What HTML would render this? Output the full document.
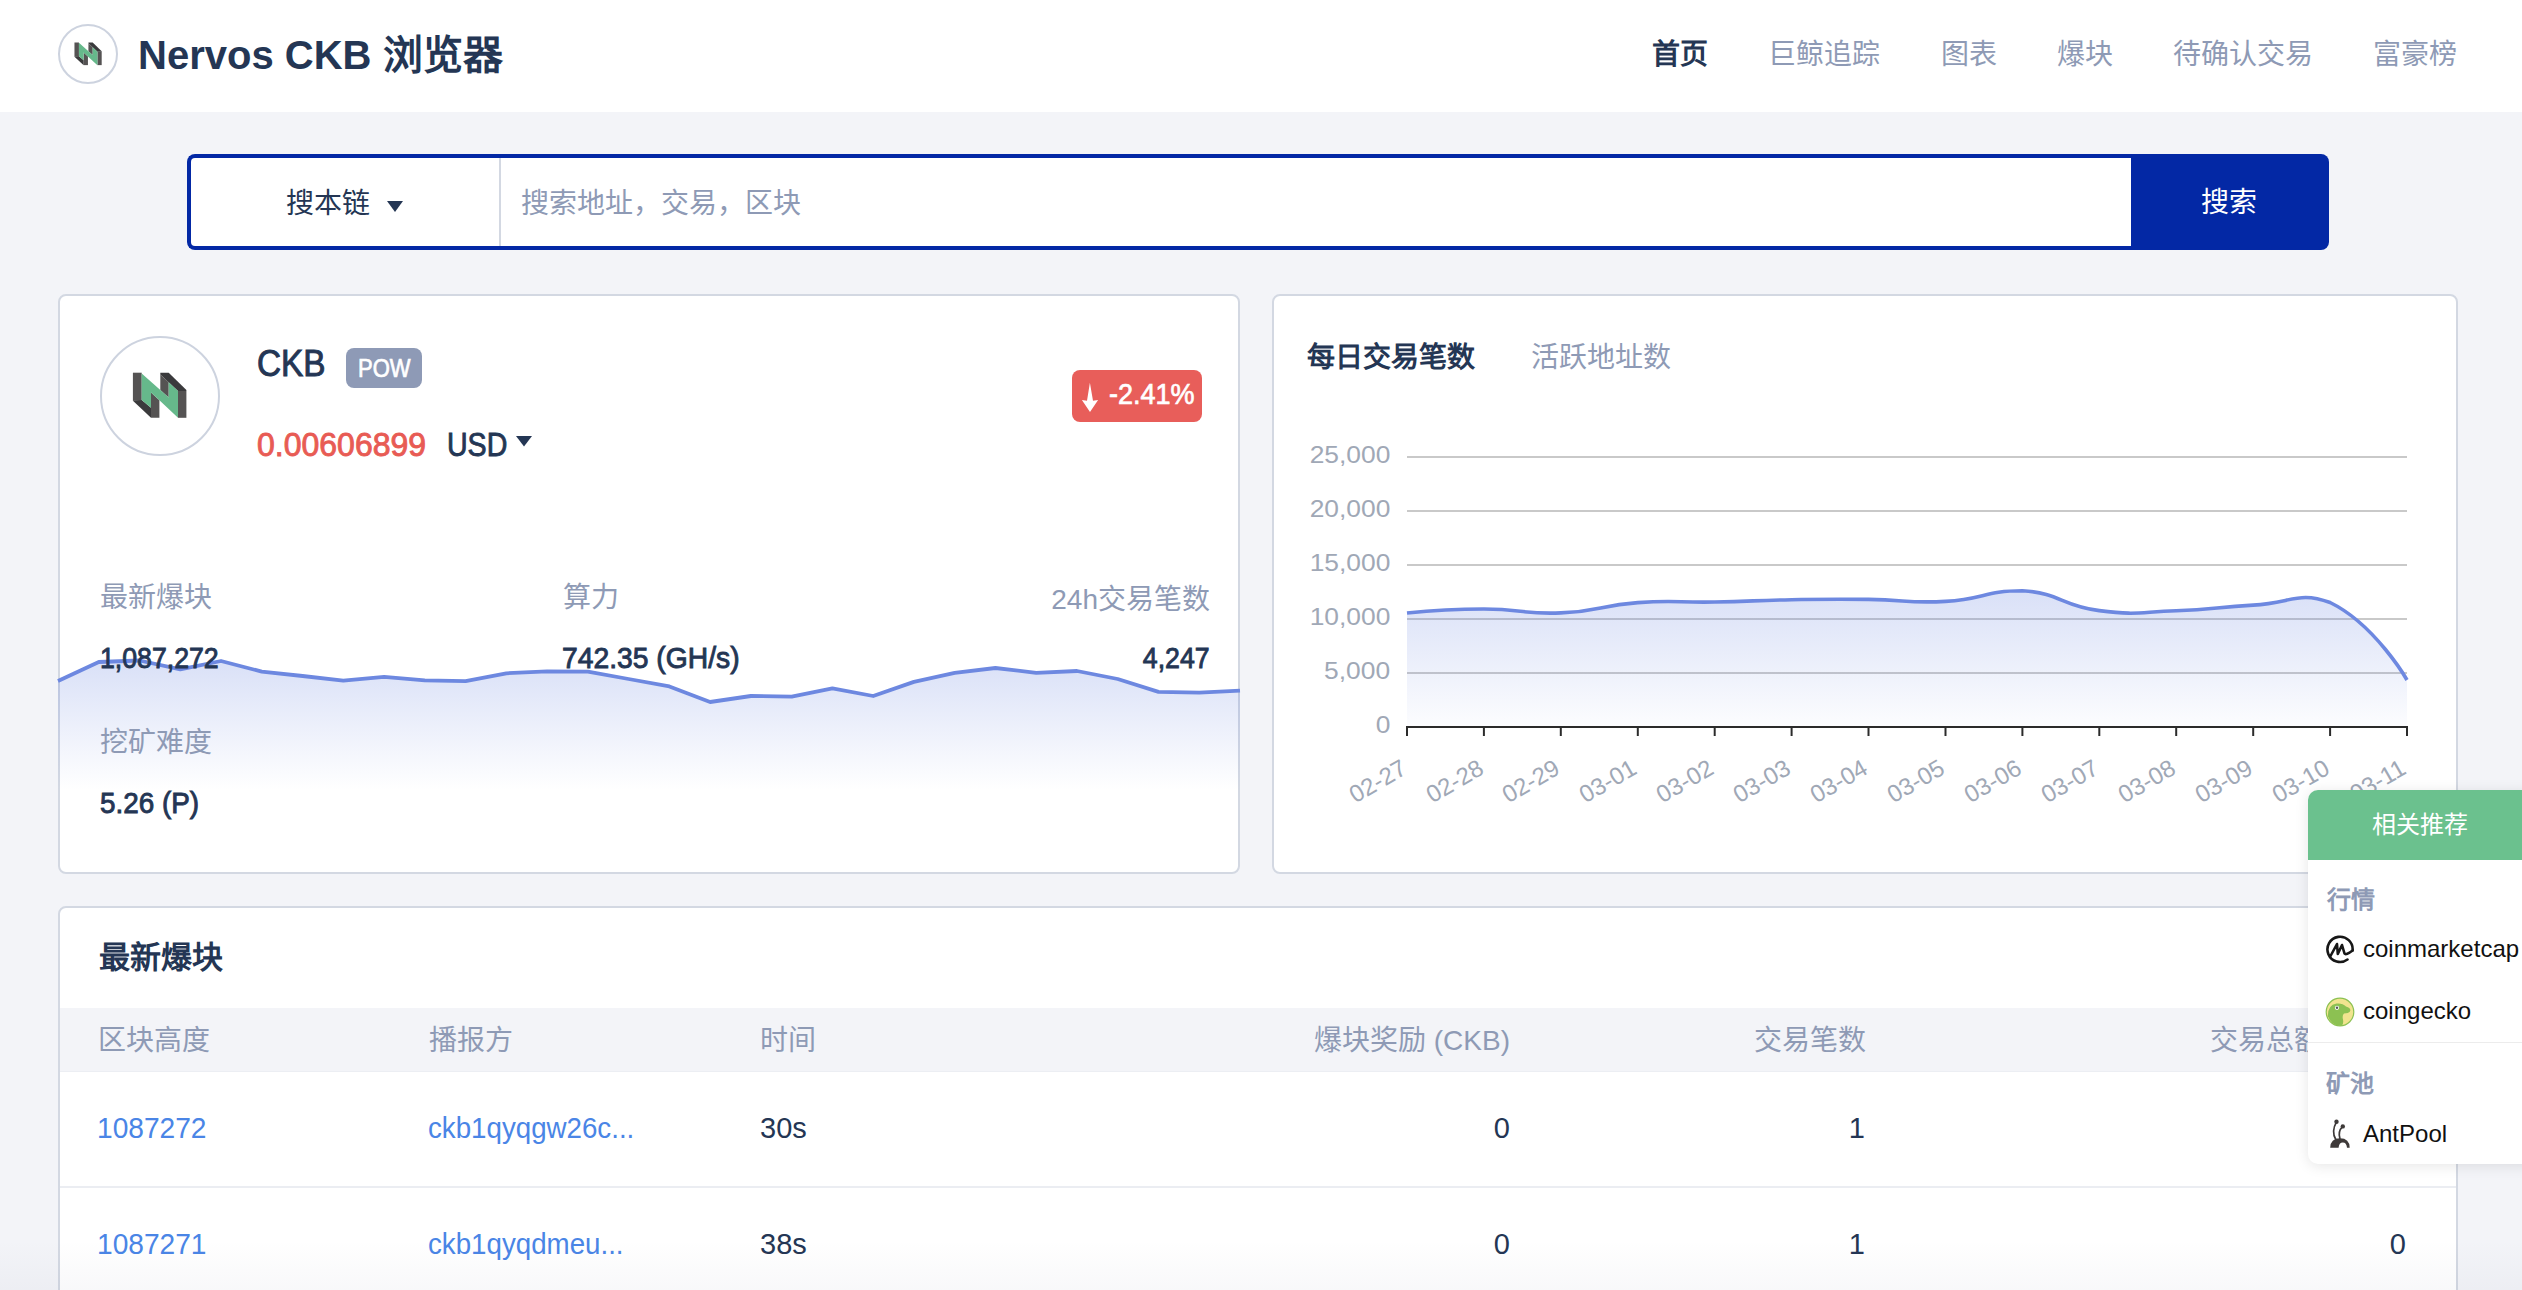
<!DOCTYPE html>
<html lang="zh-CN"><head><meta charset="utf-8"><title>Nervos CKB</title>
<style>
html,body{margin:0;padding:0;}
body{width:2522px;height:1290px;overflow:hidden;position:relative;background:#f3f4f8;font-family:"Liberation Sans",sans-serif;color:#243654;}
.a{position:absolute;white-space:nowrap;}
#hdr{position:absolute;left:0;top:0;width:2522px;height:112px;background:#fff;}
.nav{position:absolute;top:35px;font-size:28px;line-height:40px;color:#8e9ab5;}
.card{position:absolute;background:#fff;border:2px solid #d3d8e2;border-radius:8px;box-sizing:border-box;}
.lbl{color:#8e9ab5;font-size:28px;line-height:40px;}
.val{font-weight:normal;-webkit-text-stroke:0.9px #243654;font-size:29px;line-height:40px;color:#243654;}
.ylab{font-size:24px;line-height:30px;color:#a0a8b6;transform:scaleX(1.1);transform-origin:100% 0;}
.xlab{font-size:24px;line-height:30px;color:#a0a8b6;transform:rotate(-30deg);transform-origin:100% 50%;}
.th{top:1021px;font-size:28px;line-height:40px;color:#8e9ab5;}
.td{font-size:29px;line-height:40px;color:#243654;}
.lk{color:#4a85e6;}
.pt{font-size:24px;line-height:34px;color:#111;}
</style></head>
<body>
<svg width="0" height="0" style="position:absolute"><symbol id="nlogo" viewBox="7 7 55 46"><polygon points="7.9,7.7 16.7,7.7 16.7,35.8 7.9,35.8" fill="#555353"/><polygon points="7.9,35.8 16.7,34.9 26,42.8 26,52.8" fill="#3a3a3c"/><polygon points="35.3,7.7 43.7,7.7 61.4,25 61.4,26 53,26 35.3,9.5" fill="#3a3a3c"/><polygon points="35.3,9.5 43.7,17.3 43.7,32.6 35.3,25.1" fill="#555353"/><polygon points="53,26 61.4,26 61.4,52.8 53,52.8" fill="#555353"/><polygon points="26,27.4 34.4,35.3 34.4,52.8 26,52.8" fill="#555353"/><polygon points="16.7,8.4 35.3,25.1 43.7,32.6 43.7,17.3 53,26 53,52.8 34.4,35.3 26,27.4 26,42.8 16.7,34.9" fill="#66b98b"/></symbol></svg>
<!-- HEADER -->
<div id="hdr">
  <div class="a" style="left:58px;top:24px;width:60px;height:60px;border:2px solid #cdd3df;border-radius:50%;box-sizing:border-box;background:#fff;"></div>
  <svg class="a" style="left:74px;top:42px" width="28" height="23.5"><use href="#nlogo"/></svg>
  <div class="a" style="left:138px;top:33px;font-size:40px;line-height:44px;font-weight:bold;color:#243654;">Nervos CKB 浏览器</div>
  <div class="a nav" style="left:1652px;font-weight:bold;color:#243654;">首页</div>
  <div class="a nav" style="left:1768px;">巨鲸追踪</div>
  <div class="a nav" style="left:1941px;">图表</div>
  <div class="a nav" style="left:2057px;">爆块</div>
  <div class="a nav" style="left:2173px;">待确认交易</div>
  <div class="a nav" style="left:2373px;">富豪榜</div>
</div>

<!-- SEARCH -->
<div class="a" style="left:191px;top:158px;width:1940px;height:88px;background:#fff;"></div>
<div class="a" style="left:2131px;top:154px;width:198px;height:96px;border-radius:0 8px 8px 0;background:#0328a5;"></div>
<div class="a" style="left:2201px;top:183px;font-size:28px;line-height:40px;color:#fff;">搜索</div>
<div class="a" style="left:187px;top:154px;width:1944px;height:96px;border:4px solid #0328a5;border-right:0;border-radius:8px 0 0 8px;box-sizing:border-box;background:transparent;">
  <div class="a" style="left:308px;top:0;width:2px;height:88px;background:#d3d8e2;"></div>
  <div class="a" style="left:95px;top:26px;font-size:28px;line-height:40px;color:#243654;">搜本链</div>
  <svg class="a" style="left:196px;top:43px" width="16" height="11" viewBox="0 0 16 11"><polygon points="0,0 16,0 8,11" fill="#243654"/></svg>
  <div class="a" style="left:330px;top:26px;font-size:28px;line-height:40px;color:#8e9ab5;">搜索地址，交易，区块</div>
  
</div>

<!-- CARDS -->
<div class="card" style="left:58px;top:294px;width:1182px;height:580px;"></div>
<div class="card" style="left:1272px;top:294px;width:1186px;height:580px;"></div>
<div class="card" style="left:58px;top:906px;width:2400px;height:420px;"></div>

<!-- LEFT CARD CONTENT -->
<svg class="a" style="left:0;top:0" width="2522" height="1290" viewBox="0 0 2522 1290">
  <defs>
    <linearGradient id="lg1" x1="0" y1="660" x2="0" y2="790" gradientUnits="userSpaceOnUse">
      <stop offset="0" stop-color="#6d88e0" stop-opacity="0.26"/>
      <stop offset="1" stop-color="#6d88e0" stop-opacity="0"/>
    </linearGradient>
  </defs>
  <polygon points="58.0,681.0 98.8,662.0 139.5,660.5 180.3,669.3 221.0,661.0 261.8,671.6 302.6,676.0 343.3,680.7 384.1,676.9 424.8,680.4 465.6,681.2 506.3,673.3 547.1,671.4 587.9,671.6 628.6,679.0 669.4,686.4 710.1,702.0 750.9,696.0 791.7,696.6 832.4,688.3 873.2,696.0 913.9,681.9 954.7,672.8 995.4,668.0 1036.2,672.8 1077.0,671.0 1117.7,679.0 1158.5,691.9 1199.2,692.6 1240.0,690.7 1240,800 58,800" fill="url(#lg1)"/>
  <polyline points="58.0,681.0 98.8,662.0 139.5,660.5 180.3,669.3 221.0,661.0 261.8,671.6 302.6,676.0 343.3,680.7 384.1,676.9 424.8,680.4 465.6,681.2 506.3,673.3 547.1,671.4 587.9,671.6 628.6,679.0 669.4,686.4 710.1,702.0 750.9,696.0 791.7,696.6 832.4,688.3 873.2,696.0 913.9,681.9 954.7,672.8 995.4,668.0 1036.2,672.8 1077.0,671.0 1117.7,679.0 1158.5,691.9 1199.2,692.6 1240.0,690.7" fill="none" stroke="#6d88e0" stroke-width="3.8" stroke-linejoin="round"/>
</svg>
<div class="a" style="left:100px;top:336px;width:120px;height:120px;border:2px solid #cdd3df;border-radius:50%;box-sizing:border-box;"></div>
<svg class="a" style="left:132px;top:372px" width="55" height="46"><use href="#nlogo"/></svg>
<div class="a" style="left:257px;top:342px;font-size:37px;line-height:44px;-webkit-text-stroke:1px #243654;color:#243654;transform:scaleX(0.9);transform-origin:0 0;">CKB</div>
<div class="a" style="left:346px;top:348px;width:76px;height:40px;border-radius:8px;background:#8e9ab6;"></div>
<div class="a" style="left:358px;top:352px;font-size:25px;line-height:32px;-webkit-text-stroke:0.7px #fff;color:#fff;transform:scaleX(0.88);transform-origin:0 0;">POW</div>
<div class="a" style="left:257px;top:425px;font-size:33px;line-height:40px;color:#e85b54;-webkit-text-stroke:0.9px #e85b54;transform:scaleX(0.97);transform-origin:0 0;">0.00606899</div>
<div class="a" style="left:447px;top:425px;font-size:33px;line-height:40px;-webkit-text-stroke:0.9px #243654;color:#243654;transform:scaleX(0.865);transform-origin:0 0;">USD</div>
<svg class="a" style="left:516px;top:436px" width="16" height="11" viewBox="0 0 16 11"><polygon points="0,0 16,0 8,10.5" fill="#243654"/></svg>
<div class="a" style="left:1072px;top:370px;width:130px;height:52px;border-radius:8px;background:#e85e5a;"></div>
<svg class="a" style="left:1081px;top:382px" width="18" height="32" viewBox="0 0 18 32"><polygon points="8.9,0.8 12,18.8 17.1,18 9,30 0.9,18 6,18.8" fill="#fff"/></svg>
<div class="a" style="left:1109px;top:377px;font-size:30px;line-height:34px;color:#fff;-webkit-text-stroke:0.7px #fff;transform:scaleX(0.9);transform-origin:0 0;">-2.41%</div>

<div class="a lbl" style="left:100px;top:578px;">最新爆块</div>
<div class="a val" style="left:100px;top:638px;transform:scaleX(0.92);transform-origin:0 0;">1,087,272</div>
<div class="a lbl" style="left:100px;top:723px;">挖矿难度</div>
<div class="a val" style="left:100px;top:783px;transform:scaleX(0.96);transform-origin:0 0;">5.26 (P)</div>
<div class="a lbl" style="left:563px;top:578px;">算力</div>
<div class="a val" style="left:562px;top:638px;transform:scaleX(0.975);transform-origin:0 0;">742.35 (GH/s)</div>
<div class="a lbl" style="right:1312px;top:580px;">24h交易笔数</div>
<div class="a val" style="right:1312px;top:638px;transform:scaleX(0.92);transform-origin:100% 0;">4,247</div>

<!-- RIGHT CARD CONTENT -->
<div class="a" style="left:1307px;top:338px;font-size:28px;line-height:40px;font-weight:bold;color:#243654;">每日交易笔数</div>
<div class="a" style="left:1531px;top:338px;font-size:28px;line-height:40px;color:#8e9ab5;">活跃地址数</div>
<svg class="a" style="left:0;top:0" width="2522" height="1290" viewBox="0 0 2522 1290">
  <defs>
    <linearGradient id="lg2" x1="0" y1="590" x2="0" y2="727" gradientUnits="userSpaceOnUse">
      <stop offset="0" stop-color="#6d88e0" stop-opacity="0.26"/>
      <stop offset="1" stop-color="#6d88e0" stop-opacity="0.02"/>
    </linearGradient>
  </defs>
  <g stroke="#c9c9c9" stroke-width="2"><line x1="1407" y1="457" x2="2407" y2="457"/><line x1="1407" y1="511" x2="2407" y2="511"/><line x1="1407" y1="565" x2="2407" y2="565"/><line x1="1407" y1="619" x2="2407" y2="619"/><line x1="1407" y1="673" x2="2407" y2="673"/></g>
  <path d="M1407.0,613.0 C1407.0,613.0 1445.5,609.0 1483.9,609.0 C1522.4,609.0 1522.5,614.5 1560.8,612.9 C1599.5,611.3 1599.1,605.3 1637.8,602.6 C1676.1,599.9 1676.2,602.7 1714.7,602.0 C1753.2,601.3 1753.1,600.4 1791.6,599.7 C1830.1,599.1 1830.1,599.0 1868.5,599.4 C1907.0,599.8 1907.2,603.5 1945.5,601.4 C1984.1,599.2 1984.4,590.8 2022.4,590.8 C2061.3,593.1 2060.2,605.5 2099.3,610.6 C2137.2,615.5 2137.8,612.2 2176.2,610.8 C2214.7,609.4 2214.7,607.2 2253.2,605.1 C2291.6,603.0 2298.3,590.8 2330.1,602.5 C2375.2,624.5 2407.0,680.0 2407.0,680.0 L2407,727 L1407,727 Z" fill="url(#lg2)"/>
  <path d="M1407.0,613.0 C1407.0,613.0 1445.5,609.0 1483.9,609.0 C1522.4,609.0 1522.5,614.5 1560.8,612.9 C1599.5,611.3 1599.1,605.3 1637.8,602.6 C1676.1,599.9 1676.2,602.7 1714.7,602.0 C1753.2,601.3 1753.1,600.4 1791.6,599.7 C1830.1,599.1 1830.1,599.0 1868.5,599.4 C1907.0,599.8 1907.2,603.5 1945.5,601.4 C1984.1,599.2 1984.4,590.8 2022.4,590.8 C2061.3,593.1 2060.2,605.5 2099.3,610.6 C2137.2,615.5 2137.8,612.2 2176.2,610.8 C2214.7,609.4 2214.7,607.2 2253.2,605.1 C2291.6,603.0 2298.3,590.8 2330.1,602.5 C2375.2,624.5 2407.0,680.0 2407.0,680.0" fill="none" stroke="#6d88e0" stroke-width="3.6"/>
  <g stroke="#2b2b2b" stroke-width="2"><line x1="1406" y1="727" x2="2408" y2="727"/><line x1="1407.0" y1="727" x2="1407.0" y2="736" /><line x1="1483.9" y1="727" x2="1483.9" y2="736" /><line x1="1560.8" y1="727" x2="1560.8" y2="736" /><line x1="1637.8" y1="727" x2="1637.8" y2="736" /><line x1="1714.7" y1="727" x2="1714.7" y2="736" /><line x1="1791.6" y1="727" x2="1791.6" y2="736" /><line x1="1868.5" y1="727" x2="1868.5" y2="736" /><line x1="1945.5" y1="727" x2="1945.5" y2="736" /><line x1="2022.4" y1="727" x2="2022.4" y2="736" /><line x1="2099.3" y1="727" x2="2099.3" y2="736" /><line x1="2176.2" y1="727" x2="2176.2" y2="736" /><line x1="2253.2" y1="727" x2="2253.2" y2="736" /><line x1="2330.1" y1="727" x2="2330.1" y2="736" /><line x1="2407.0" y1="727" x2="2407.0" y2="736" /></g>
</svg>
<div class="a ylab" style="right:1132px;top:440px;">25,000</div>
<div class="a ylab" style="right:1132px;top:494px;">20,000</div>
<div class="a ylab" style="right:1132px;top:548px;">15,000</div>
<div class="a ylab" style="right:1132px;top:602px;">10,000</div>
<div class="a ylab" style="right:1132px;top:656px;">5,000</div>
<div class="a ylab" style="right:1132px;top:710px;">0</div>

<div class="a xlab" style="right:1118.0px;top:751px;">02-27</div>
<div class="a xlab" style="right:1041.1px;top:751px;">02-28</div>
<div class="a xlab" style="right:964.2px;top:751px;">02-29</div>
<div class="a xlab" style="right:887.2px;top:751px;">03-01</div>
<div class="a xlab" style="right:810.3px;top:751px;">03-02</div>
<div class="a xlab" style="right:733.4px;top:751px;">03-03</div>
<div class="a xlab" style="right:656.5px;top:751px;">03-04</div>
<div class="a xlab" style="right:579.5px;top:751px;">03-05</div>
<div class="a xlab" style="right:502.6px;top:751px;">03-06</div>
<div class="a xlab" style="right:425.7px;top:751px;">03-07</div>
<div class="a xlab" style="right:348.8px;top:751px;">03-08</div>
<div class="a xlab" style="right:271.8px;top:751px;">03-09</div>
<div class="a xlab" style="right:194.9px;top:751px;">03-10</div>
<div class="a xlab" style="right:118.0px;top:751px;">03-11</div>


<!-- BOTTOM TABLE -->
<div class="a" style="left:99px;top:938px;font-size:31px;line-height:40px;font-weight:bold;color:#243654;">最新爆块</div>
<div class="a" style="left:60px;top:1008px;width:2396px;height:64px;background:#f3f4f8;"></div>
<div class="a" style="left:60px;top:1071px;width:2396px;height:1px;background:#eceef3;"></div>
<div class="a th" style="left:98px;">区块高度</div>
<div class="a th" style="left:429px;">播报方</div>
<div class="a th" style="left:760px;">时间</div>
<div class="a th" style="right:1012px;">爆块奖励 (CKB)</div>
<div class="a th" style="right:656px;">交易笔数</div>
<div class="a th" style="right:116px;">交易总额 (CKB)</div>
<div class="a" style="left:60px;top:1186px;width:2396px;height:2px;background:#ebedf2;"></div>
<div class="a td lk" style="left:97px;top:1108px;transform:scaleX(0.97);transform-origin:0 0;">1087272</div>
<div class="a td lk" style="left:428px;top:1108px;transform:scaleX(0.955);transform-origin:0 0;">ckb1qyqgw26c...</div>
<div class="a td" style="left:760px;top:1108px;">30s</div>
<div class="a td" style="right:1012px;top:1108px;">0</div>
<div class="a td" style="right:657px;top:1108px;">1</div>
<div class="a td" style="right:116px;top:1108px;">0</div>
<div class="a td lk" style="left:97px;top:1224px;transform:scaleX(0.97);transform-origin:0 0;">1087271</div>
<div class="a td lk" style="left:428px;top:1224px;transform:scaleX(0.955);transform-origin:0 0;">ckb1qyqdmeu...</div>
<div class="a td" style="left:760px;top:1224px;">38s</div>
<div class="a td" style="right:1012px;top:1224px;">0</div>
<div class="a td" style="right:657px;top:1224px;">1</div>
<div class="a td" style="right:116px;top:1224px;">0</div>

<div class="a" style="left:0;top:1240px;width:2522px;height:50px;background:linear-gradient(rgba(40,50,90,0),rgba(40,50,90,0.03));"></div>
<!-- POPUP -->
<div class="a" style="left:2308px;top:790px;width:240px;height:374px;background:#fff;border-radius:10px;box-shadow:0 2px 14px rgba(0,0,0,0.10);overflow:hidden;">
  <div class="a" style="left:0;top:0;width:240px;height:70px;background:#6bc18e;"></div>
  <div class="a" style="left:64px;top:18px;font-size:24px;line-height:34px;color:#fff;">相关推荐</div>
  <div class="a" style="left:19px;top:93px;font-size:24px;line-height:34px;font-weight:bold;color:#8e9ab5;">行情</div>
  <svg class="a" style="left:17px;top:145px" width="30" height="30" viewBox="0 0 30 30">
    <path d="M22.5,24.5 A12.6,12.6 0 1 1 27.6,15.5" fill="none" stroke="#171717" stroke-width="2.6" stroke-linecap="round"/>
    <path d="M5.5,21 L12,9 L12.8,19 L17,10 L19.5,18.5 Q21,20.5 27.6,15.5" fill="none" stroke="#171717" stroke-width="2.6" stroke-linejoin="round" stroke-linecap="round"/>
  </svg>
  <div class="a pt" style="left:55px;top:142px;">coinmarketcap</div>
  <svg class="a" style="left:17px;top:207px" width="30" height="30" viewBox="0 0 30 30">
    <circle cx="15" cy="15" r="13.8" fill="#f1e48f" stroke="#8cc152" stroke-width="1.2"/>
    <path d="M2.8,19 Q2.8,8 11.5,6.6 Q17.5,6 21,9.6 Q25.2,10.8 25.4,13.2 Q25,15.8 21,16.2 L19,16.6 Q17,18.6 18,22.5 Q18.8,26.6 16.8,28.8 Q6.5,29.5 2.8,19 Z" fill="#8cc152"/>
    <circle cx="12" cy="10.8" r="2.1" fill="#fff"/><circle cx="12" cy="10.8" r="1.2" fill="#555"/>
  </svg>
  <div class="a pt" style="left:55px;top:204px;">coingecko</div>
  <div class="a" style="left:0;top:252px;width:240px;height:1px;background:#ececec;"></div>
  <div class="a" style="left:18px;top:277px;font-size:24px;line-height:34px;font-weight:bold;color:#8e9ab5;">矿池</div>
  <svg class="a" style="left:20px;top:329px" width="24" height="30" viewBox="0 0 24 30">
    <path d="M2.2,28.8 Q2.5,19.3 12,19.3 Q21.5,19.3 21.7,28.8 L19,28.8 Q18.5,23.5 14.8,23.5 Q11,23.5 10.6,28.8 Z" fill="#3e3a39"/>
    <path d="M7.8,20.5 Q3,12.5 8.5,2.8" fill="none" stroke="#3e3a39" stroke-width="1.7"/>
    <path d="M12,20 Q9.5,12.5 14.8,7.4" fill="none" stroke="#3e3a39" stroke-width="1.7"/>
    <circle cx="8.5" cy="2.8" r="2.2" fill="#3e3a39"/><circle cx="14.8" cy="7.4" r="2.2" fill="#3e3a39"/>
  </svg>
  <div class="a pt" style="left:55px;top:327px;">AntPool</div>
</div>

</body></html>
